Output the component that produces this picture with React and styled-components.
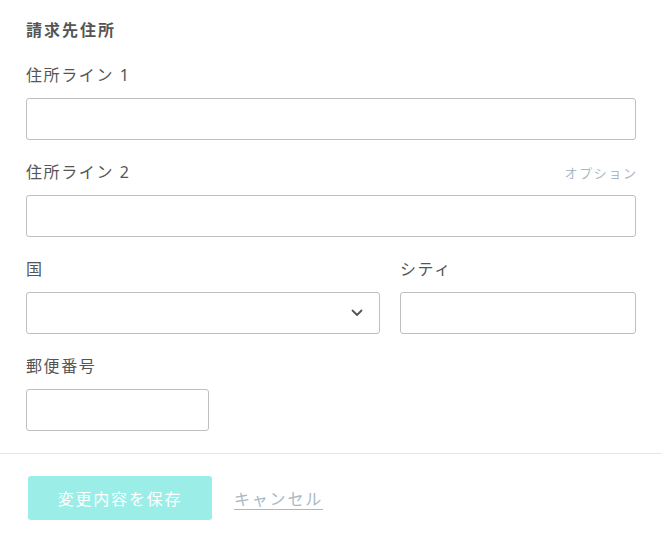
import React from "react";
import styled, { createGlobalStyle } from "styled-components";

const GlobalStyle = createGlobalStyle`
  body {
    margin: 0;
    background: #ffffff;
    font-family: "Noto Sans", "Noto Sans CJK JP", sans-serif;
    color: #555555;
  }
`;

const Page = styled.div`
  width: 662px;
  box-sizing: border-box;
`;

const Section = styled.section`
  padding: 18px 26px 22px 26px;
  display: flex;
  flex-direction: column;
  gap: 20px;
`;

const Title = styled.h2`
  margin: 0 0 1px 0;
  font-size: 16px;
  line-height: 24px;
  font-weight: 700;
  letter-spacing: 2px;
  color: #555555;
`;

const Row = styled.div`
  display: grid;
  grid-template-columns: 354px 236px;
  column-gap: 20px;
`;

const Field = styled.div`
  display: flex;
  flex-direction: column;
  gap: 11px;
  width: ${(p) => p.$width || "auto"};
`;

const LabelRow = styled.div`
  display: flex;
  justify-content: space-between;
  align-items: baseline;
  height: 24px;
`;

const Label = styled.label`
  font-size: 16px;
  line-height: 24px;
  font-weight: 400;
  letter-spacing: 1.6px;
  color: #555555;
`;

const Optional = styled.span`
  font-size: 13px;
  color: #a9bac6;
  letter-spacing: 1.6px;
  margin-right: -1.6px;
`;

const Input = styled.input`
  height: 42px;
  width: 100%;
  box-sizing: border-box;
  border: 1px solid #bfbfbf;
  border-radius: 3px;
  padding: 0 12px;
  font-size: 16px;
  font-family: inherit;
  outline: none;
  background: #ffffff;
`;

const SelectBox = styled.div`
  height: 42px;
  box-sizing: border-box;
  border: 1px solid #bfbfbf;
  border-radius: 3px;
  background: #ffffff;
  display: flex;
  align-items: center;
  justify-content: flex-end;
  padding-right: 16px;
`;

const Divider = styled.hr`
  margin: 0;
  border: none;
  border-top: 1px solid #e6e6e6;
`;

const Footer = styled.div`
  display: flex;
  align-items: center;
  gap: 22px;
  padding: 22px 28px;
`;

const SaveButton = styled.button`
  width: 184px;
  height: 44px;
  border: none;
  border-radius: 3px;
  background: #9beee7;
  color: #ffffff;
  font-size: 16px;
  letter-spacing: 1.8px;
  font-family: inherit;
`;

const CancelLink = styled.a`
  font-size: 16px;
  color: #a7b8c6;
  letter-spacing: 1.8px;
  text-decoration: underline;
  text-underline-offset: 4px;
`;

const Chevron = () => (
  <svg width="12" height="8" viewBox="0 0 12 8">
    <path d="M1.5 1.5 L6 6 L10.5 1.5" fill="none" stroke="#555" strokeWidth="1.8" strokeLinecap="round" strokeLinejoin="round" />
  </svg>
);

export default function App() {
  return (
    <Page>
      <GlobalStyle />
      <Section>
        <Title>請求先住所</Title>
        <Field>
          <LabelRow>
            <Label>住所ライン 1</Label>
          </LabelRow>
          <Input />
        </Field>
        <Field>
          <LabelRow>
            <Label>住所ライン 2</Label>
            <Optional>オプション</Optional>
          </LabelRow>
          <Input />
        </Field>
        <Row>
          <Field>
            <LabelRow>
              <Label>国</Label>
            </LabelRow>
            <SelectBox>
              <Chevron />
            </SelectBox>
          </Field>
          <Field>
            <LabelRow>
              <Label>シティ</Label>
            </LabelRow>
            <Input />
          </Field>
        </Row>
        <Field $width="183px">
          <LabelRow>
            <Label>郵便番号</Label>
          </LabelRow>
          <Input />
        </Field>
      </Section>
      <Divider />
      <Footer>
        <SaveButton>変更内容を保存</SaveButton>
        <CancelLink>キャンセル</CancelLink>
      </Footer>
    </Page>
  );
}
